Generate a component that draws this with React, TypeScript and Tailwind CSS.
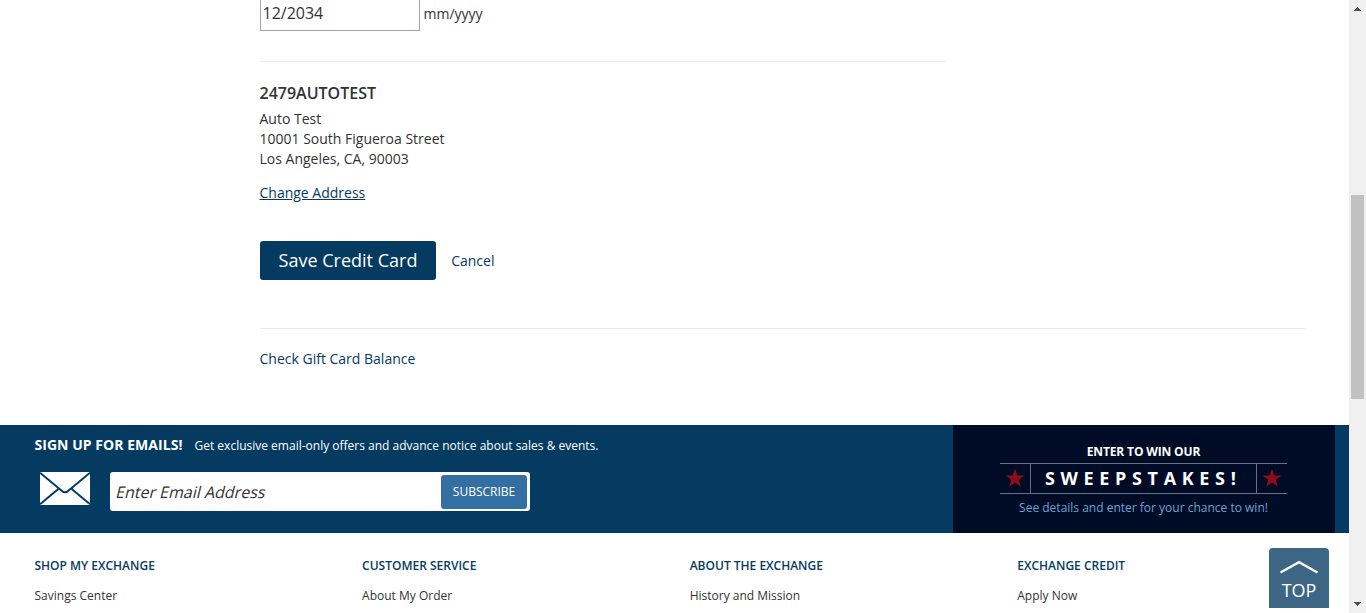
import React from "react";

const columns = [
  { title: "SHOP MY EXCHANGE", link: "Savings Center" },
  { title: "CUSTOMER SERVICE", link: "About My Order" },
  { title: "ABOUT THE EXCHANGE", link: "History and Mission" },
  { title: "EXCHANGE CREDIT", link: "Apply Now" },
];

function Star() {
  return (
    <svg width="20" height="20" viewBox="0 0 20 20" className="mb-[2px] shrink-0">
      <path d="M10 0.5 12.3 7.4H19.5L13.7 11.7 15.9 18.7 10 14.4 4.1 18.7 6.3 11.7 0.5 7.4H7.7Z" fill="#8f0c1c" />
    </svg>
  );
}

function CardForm() {
  return (
    <main className="h-[425px] pl-[259.5px] text-[14px] leading-5 text-[#333]">
      <div className="flex h-[31px] items-start pl-[0.5px]">
        <div className="h-[31px] w-[160px] border border-t-0 border-[#a5a5a5] pl-[1.5px] text-[16px] leading-[27px]">12/2034</div>
        <span className="ml-[3.5px] pt-1">mm/yyyy</span>
      </div>
      <div className="mt-[30px] h-px w-[686px] bg-[#ebebeb]" />
      <h2 className="mt-5 h-[22px] text-[16px] font-semibold leading-[22px]">2479AUTOTEST</h2>
      <address className="mt-[5px] not-italic">
        <p>Auto Test</p>
        <p>10001 South Figueroa Street</p>
        <p>Los Angeles, CA, 90003</p>
      </address>
      <a className="mt-[14px] block w-fit text-[#053b61] underline">Change Address</a>
      <div className="mt-[38px] flex h-[39px] items-center pl-[0.5px]">
        <button className="h-[39px] w-[176px] rounded-[3px] bg-[#053b61] pb-[2px] text-[18px] text-white">Save Credit Card</button>
        <a className="ml-[15.2px] text-[#053b61]">Cancel</a>
      </div>
      <div className="mt-[48px] h-px w-[1045px] bg-[#ebebeb]" />
      <a className="mt-5 block w-fit text-[#053b61]">Check Gift Card Balance</a>
    </main>
  );
}

function EmailSignup() {
  return (
    <div className="w-[953px] pl-[34px] text-white">
      <div className="flex h-[40px] items-center whitespace-nowrap">
        <strong className="w-[160.5px] pb-[1px] pl-[0.5px] text-[14px] font-bold tracking-[0.04px]">SIGN UP FOR EMAILS!</strong>
        <span className="pt-[2px] text-[12px]">Get exclusive email-only offers and advance notice about sales &amp; events.</span>
      </div>
      <div className="mt-[7px] flex items-start pl-[6px]">
        <svg width="50" height="33" viewBox="0 0 50 33">
          <rect width="50" height="33" fill="#fff" />
          <path d="M0 .8 22 19Q25 21.5 28 19L50 .8M0 32.2 18.3 17M50 32.2 31.7 17" fill="none" stroke="#053b61" strokeWidth="2" />
        </svg>
        <div className="ml-5 flex h-[39px] w-[420px] items-center justify-between rounded-[3px] bg-white pl-[4.5px] pr-[3px]">
          <span className="inline-block origin-[0_75%] -skew-x-[14deg] text-[16px] text-[#333]">Enter Email Address</span>
          <button className="h-[34px] w-[86px] rounded-[3px] bg-[#336fa3] text-[12px]">SUBSCRIBE</button>
        </div>
      </div>
    </div>
  );
}

function Sweepstakes() {
  return (
    <div className="flex w-[382px] flex-col items-center bg-[#000b25] pr-[1px] pt-[18px] whitespace-nowrap">
      <div className="h-5 text-[12px] font-bold leading-[17px] tracking-[-0.15px] text-white">ENTER TO WIN OUR</div>
      <div className="flex h-[31px] w-[287px] border-y border-[#68707f]">
        <div className="flex w-[30px] items-center justify-center">
          <Star />
        </div>
        <div className="flex w-[227px] items-center border-x border-[#68707f] pb-[2px] pl-[14px] text-[18px] font-bold leading-none tracking-[5.65px] text-white">
          SWEEPSTAKES!
        </div>
        <div className="flex w-[30px] items-center justify-center">
          <Star />
        </div>
      </div>
      <div className="mt-[5px] text-[12px] leading-[17px] text-[#6aa5d4]">See details and enter for your chance to win!</div>
    </div>
  );
}

export default function App() {
  return (
    <div className="flex h-[613px] w-[1366px] overflow-hidden bg-white font-['Open_Sans',sans-serif]">
      <div className="relative w-[1349px]">
        <CardForm />
        <section className="flex h-[108px] bg-[#053b61]">
          <EmailSignup />
          <Sweepstakes />
        </section>
        <footer className="grid grid-cols-[327.6px_327.6px_327.6px_300px] pl-[34.5px] pt-6 text-[12px] leading-[18px] whitespace-nowrap">
          {columns.map((c) => (
            <div key={c.title}>
              <h3 className="font-semibold text-[#053b61]">{c.title}</h3>
              <a className="mt-3 block text-[#333]">{c.link}</a>
            </div>
          ))}
        </footer>
        <button className="absolute left-[1269px] top-[548px] flex h-[60px] w-[60px] flex-col items-center rounded-t-[4px] bg-[#3c6684] pt-[12px] text-[18px] leading-[26px] text-white">
          <svg width="40" height="14" viewBox="0 0 40 14" className="shrink-0">
            <path d="M1.5 12.5 20 2.2 38.5 12.5" fill="none" stroke="#fff" strokeWidth="2.4" />
          </svg>
          <span className="mt-[3px]">TOP</span>
        </button>
      </div>
      <div className="flex w-[17px] flex-col items-center bg-[#f0f0f0]">
        <svg width="17" height="17" viewBox="0 0 17 17" shapeRendering="crispEdges">
          <path d="M5 11h7v-1h-1v-1h-1v-1h-1v-1h-1v1h-1v1h-1v1h-1z" fill="#505050" />
        </svg>
        <div className="mt-[178px] h-[204px] w-[13px] bg-[#c1c1c1]" />
        <svg width="17" height="17" viewBox="0 0 17 17" shapeRendering="crispEdges" className="mt-auto">
          <path d="M5 6h7v1h-1v1h-1v1h-1v1h-1v-1h-1v-1h-1v-1h-1z" fill="#505050" />
        </svg>
      </div>
    </div>
  );
}
